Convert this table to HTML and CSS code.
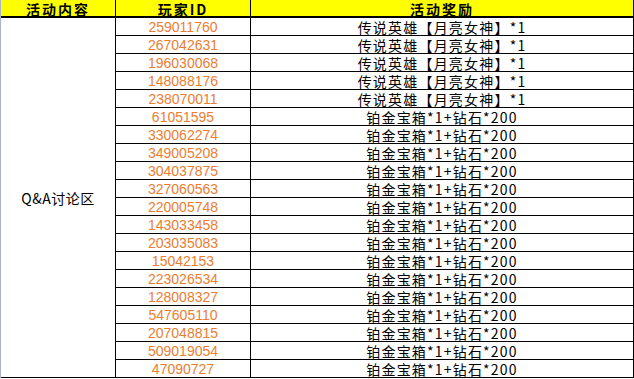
FILE: index.html
```html
<!DOCTYPE html>
<html>
<head>
<meta charset="utf-8">
<link rel="stylesheet" href="styles.css">
</head>
<body>
<div class="sheet">
  <div class="cell head"><span class="txt">活动内容</span></div>
  <div class="cell head"><span class="txt">玩家ID</span></div>
  <div class="cell head"><span class="txt">活动奖励</span></div>
  <div class="cell cat"><span class="txt">Q&amp;A讨论区</span></div>
  <div class="cell id"><span class="txt">259011760</span></div><div class="cell prize"><span class="txt">传说英雄【月亮女神】*1</span></div>
  <div class="cell id"><span class="txt">267042631</span></div><div class="cell prize"><span class="txt">传说英雄【月亮女神】*1</span></div>
  <div class="cell id"><span class="txt">196030068</span></div><div class="cell prize"><span class="txt">传说英雄【月亮女神】*1</span></div>
  <div class="cell id"><span class="txt">148088176</span></div><div class="cell prize"><span class="txt">传说英雄【月亮女神】*1</span></div>
  <div class="cell id"><span class="txt">238070011</span></div><div class="cell prize"><span class="txt">传说英雄【月亮女神】*1</span></div>
  <div class="cell id"><span class="txt">61051595</span></div><div class="cell prize"><span class="txt">铂金宝箱*1+钻石*200</span></div>
  <div class="cell id"><span class="txt">330062274</span></div><div class="cell prize"><span class="txt">铂金宝箱*1+钻石*200</span></div>
  <div class="cell id"><span class="txt">349005208</span></div><div class="cell prize"><span class="txt">铂金宝箱*1+钻石*200</span></div>
  <div class="cell id"><span class="txt">304037875</span></div><div class="cell prize"><span class="txt">铂金宝箱*1+钻石*200</span></div>
  <div class="cell id"><span class="txt">327060563</span></div><div class="cell prize"><span class="txt">铂金宝箱*1+钻石*200</span></div>
  <div class="cell id"><span class="txt">220005748</span></div><div class="cell prize"><span class="txt">铂金宝箱*1+钻石*200</span></div>
  <div class="cell id"><span class="txt">143033458</span></div><div class="cell prize"><span class="txt">铂金宝箱*1+钻石*200</span></div>
  <div class="cell id"><span class="txt">203035083</span></div><div class="cell prize"><span class="txt">铂金宝箱*1+钻石*200</span></div>
  <div class="cell id"><span class="txt">15042153</span></div><div class="cell prize"><span class="txt">铂金宝箱*1+钻石*200</span></div>
  <div class="cell id"><span class="txt">223026534</span></div><div class="cell prize"><span class="txt">铂金宝箱*1+钻石*200</span></div>
  <div class="cell id"><span class="txt">128008327</span></div><div class="cell prize"><span class="txt">铂金宝箱*1+钻石*200</span></div>
  <div class="cell id"><span class="txt">547605110</span></div><div class="cell prize"><span class="txt">铂金宝箱*1+钻石*200</span></div>
  <div class="cell id"><span class="txt">207048815</span></div><div class="cell prize"><span class="txt">铂金宝箱*1+钻石*200</span></div>
  <div class="cell id"><span class="txt">509019054</span></div><div class="cell prize"><span class="txt">铂金宝箱*1+钻石*200</span></div>
  <div class="cell id"><span class="txt">47090727</span></div><div class="cell prize"><span class="txt">铂金宝箱*1+钻石*200</span></div>
</div>
</body>
</html>
```
FILE: styles.css
```css
html, body {
  margin: 0;
  padding: 0;
  background: #ffffff;
}
.sheet {
  display: grid;
  grid-template-columns: 115px 135px 383px;
  grid-auto-rows: 18px;
  border-left: 1px solid #a9b3c9;
  width: 633px;
  font-family: "Liberation Sans", "Noto Sans CJK SC", sans-serif;
}
.cell {
  box-sizing: border-box;
  border-right: 1px solid #000;
  border-bottom: 1px solid #000;
  display: flex;
  align-items: center;
  justify-content: center;
  white-space: nowrap;
}
.txt {
  display: block;
  line-height: 1;
}
.head {
  background: #ffff00;
  font-family: "Noto Sans CJK SC", sans-serif;
  font-weight: bold;
  font-size: 14px;
  letter-spacing: 2px;
  color: #000;
  border-bottom-width: 2px;
  padding-top: 2px;
}
.cat {
  grid-row: span 20;
  font-family: "Noto Sans CJK SC", sans-serif;
  font-size: 14px;
  letter-spacing: 0.5px;
  color: #000;
}
.id {
  color: #ed7d31;
  font-size: 14px;
}
.prize {
  font-family: "Noto Sans CJK SC", sans-serif;
  font-size: 14px;
  letter-spacing: 1.2px;
  color: #000;
}
```
